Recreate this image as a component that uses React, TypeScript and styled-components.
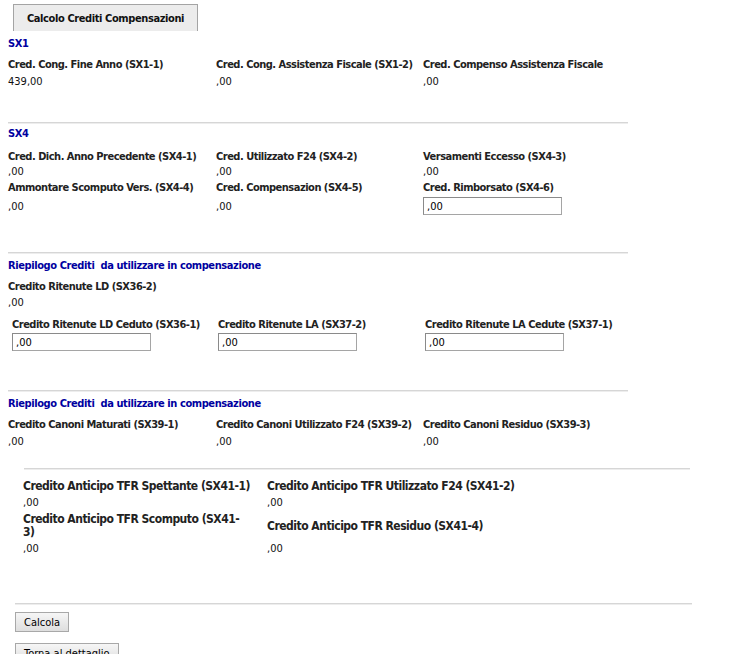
import React from 'react';
import styled, { createGlobalStyle } from 'styled-components';

const GlobalStyle = createGlobalStyle`
  body {
    margin: 0;
    background: #fff;
    font-family: "DejaVu Sans Condensed", "DejaVu Sans", Verdana, sans-serif;
    font-size: 11px;
    color: #222;
  }
`;

//탭 영역
const Page = styled.div`
  padding-top: 4px;
  width: 735px;
`;

const TabBar = styled.div`
  display: flex;
  padding-left: 13px;
`;

const Tab = styled.div`
  width: 185px;
  height: 27px;
  box-sizing: border-box;
  display: flex;
  align-items: center;
  justify-content: center;
  background: #ececec;
  border: 1px solid #a4a4a4;
  border-bottom: none;
  font-weight: bold;
  font-size: 11px;
  letter-spacing: -0.4px;
  color: #111;
`;

//섹션
const Section = styled.div<{ $left?: number; $bottom: number }>`
  margin-left: ${({ $left }) => $left ?? 8}px;
  padding-bottom: ${({ $bottom }) => $bottom}px;
`;

const Title = styled.div<{ $top: number }>`
  margin-top: ${({ $top }) => $top}px;
  line-height: 16px;
  font-weight: bold;
  letter-spacing: -0.4px;
  color: #0000a0;
`;

const Grid = styled.div<{ $cols: string; $top: number; $gap?: number }>`
  display: grid;
  grid-template-columns: ${({ $cols }) => $cols};
  row-gap: ${({ $gap }) => $gap ?? 1}px;
  margin-top: ${({ $top }) => $top}px;
`;

const Cell = styled.div`
  display: flex;
  flex-direction: column;
`;

const Label = styled.div<{ $lh?: number; $size?: number }>`
  font-weight: bold;
  font-size: ${({ $size }) => $size ?? 11}px;
  line-height: ${({ $lh }) => $lh ?? 15}px;
  letter-spacing: -0.5px;
  white-space: nowrap;
  color: #222;
`;

const TallLabel = styled(Label)`
  min-height: 26px;
  display: flex;
  align-items: center;
`;

const Value = styled.div<{ $h?: number }>`
  min-height: ${({ $h }) => $h ?? 15}px;
  line-height: 15px;
  display: flex;
  align-items: center;
  color: #111;
`;

const Input = styled.input`
  width: 139px;
  height: 18px;
  box-sizing: border-box;
  margin: 0;
  padding: 0 3px;
  font-family: inherit;
  font-size: 11px;
  color: #000;
  border: 1px solid #a5a5a5;
  border-top-color: #8a8a8a;
  border-left-color: #8a8a8a;
  background: #fff;
  outline: none;
`;

const Rule = styled.div<{ $left: number; $width: number }>`
  margin-left: ${({ $left }) => $left}px;
  width: ${({ $width }) => $width}px;
  height: 2px;
  box-sizing: border-box;
  border-top: 1px solid #d6d6d6;
  border-bottom: 1px solid #ededed;
`;

const Button = styled.button<{ $top: number }>`
  display: block;
  margin: ${({ $top }) => $top}px 0 0 15px;
  height: 20px;
  padding: 0 8px;
  font-family: inherit;
  font-size: 11px;
  color: #000;
  background: linear-gradient(#f6f6f6, #dedede);
  border: 1px solid #a8a8a8;
  border-radius: 0;
`;

type F = { label: string; value: string; input?: boolean };

const Field = ({ label, value, input, h, lh }: F & { h?: number; lh?: number }) => (
  <Cell>
    <Label $lh={lh}>{label}</Label>
    <Value $h={h}>{input ? <Input defaultValue={value} /> : value}</Value>
  </Cell>
);

export default function App() {
  return (
    <Page>
      <GlobalStyle />
      <TabBar>
        <Tab>Calcolo Crediti Compensazioni</Tab>
      </TabBar>

      <Section $bottom={33}>
        <Title $top={5}>SX1</Title>
        <Grid $cols="208px 207px 205px" $top={5}>
          <Field lh={16} h={16} label="Cred. Cong. Fine Anno (SX1-1)" value="439,00" />
          <Field lh={16} h={16} label="Cred. Cong. Assistenza Fiscale (SX1-2)" value=",00" />
          <Field lh={16} h={16} label="Cred. Compenso Assistenza Fiscale" value=",00" />
        </Grid>
      </Section>
      <Rule $left={8} $width={620} />

      <Section $bottom={35}>
        <Title $top={2}>SX4</Title>
        <Grid $cols="208px 207px 205px" $top={7}>
          <Field label="Cred. Dich. Anno Precedente (SX4-1)" value=",00" />
          <Field label="Cred. Utilizzato F24 (SX4-2)" value=",00" />
          <Field label="Versamenti Eccesso (SX4-3)" value=",00" />
          <Field h={22} label="Ammontare Scomputo Vers. (SX4-4)" value=",00" />
          <Field h={22} label="Cred. Compensazion (SX4-5)" value=",00" />
          <Field h={22} label="Cred. Rimborsato (SX4-6)" value=",00" input />
        </Grid>
      </Section>
      <Rule $left={8} $width={620} />

      <Section $bottom={38}>
        <Title $top={4}>Riepilogo Crediti&nbsp; da utilizzare in compensazione</Title>
        <Grid $cols="208px" $top={5}>
          <Field lh={16} label="Credito Ritenute LD (SX36-2)" value=",00" />
        </Grid>
        <Section $left={4} $bottom={0}>
          <Grid $cols="206px 207px 205px" $top={7}>
            <Field h={20} label="Credito Ritenute LD Ceduto (SX36-1)" value=",00" input />
            <Field h={20} label="Credito Ritenute LA (SX37-2)" value=",00" input />
            <Field h={20} label="Credito Ritenute LA Cedute (SX37-1)" value=",00" input />
          </Grid>
        </Section>
      </Section>
      <Rule $left={8} $width={620} />

      <Section $bottom={19}>
        <Title $top={4}>Riepilogo Crediti&nbsp; da utilizzare in compensazione</Title>
        <Grid $cols="208px 207px 205px" $top={5}>
          <Field lh={16} h={16} label="Credito Canoni Maturati (SX39-1)" value=",00" />
          <Field lh={16} h={16} label="Credito Canoni Utilizzato F24 (SX39-2)" value=",00" />
          <Field lh={16} h={16} label="Credito Canoni Residuo (SX39-3)" value=",00" />
        </Grid>
      </Section>
      <Rule $left={24} $width={666} />

      <Section $left={23} $bottom={45}>
        <Grid $cols="244px 244px" $top={8} $gap={3}>
          <Cell>
            <Label $size={12} $lh={16}>Credito Anticipo TFR Spettante (SX41-1)</Label>
            <Value $h={16}>,00</Value>
          </Cell>
          <Cell>
            <Label $size={12} $lh={16}>Credito Anticipo TFR Utilizzato F24 (SX41-2)</Label>
            <Value $h={16}>,00</Value>
          </Cell>
          <Cell>
            <TallLabel $size={12} $lh={13}>
              <span>
                Credito Anticipo TFR Scomputo (SX41-
                <br />
                3)
              </span>
            </TallLabel>
            <Value $h={19}>,00</Value>
          </Cell>
          <Cell>
            <TallLabel $size={12} $lh={13}>Credito Anticipo TFR Residuo (SX41-4)</TallLabel>
            <Value $h={19}>,00</Value>
          </Cell>
        </Grid>
      </Section>
      <Rule $left={15} $width={677} />

      <Button $top={7}>Calcola</Button>
      <Button $top={11}>Torna al dettaglio</Button>
    </Page>
  );
}
